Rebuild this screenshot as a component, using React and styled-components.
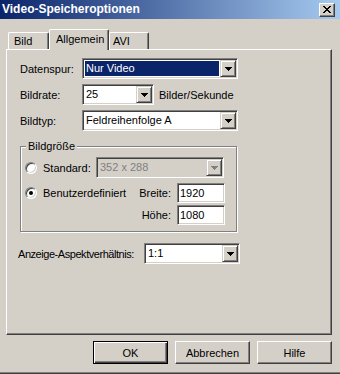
import React from 'react';
import styled, { createGlobalStyle } from 'styled-components';

const Global = createGlobalStyle`
  html, body { margin: 0; padding: 0; background: #d4d0c8; }
  body {
    font-family: "Liberation Sans", Arial, sans-serif;
    font-size: 11px;
    color: #000;
  }
`;

const Window = styled.div`
  width: 340px;
  height: 374px;
  box-sizing: border-box;
  display: flex;
  flex-direction: column;
  background: #d4d0c8;
  border-bottom: 1px solid #404040;
  box-shadow: inset 0 -1px #808080;
`;

const TitleBar = styled.div`
  height: 19px;
  display: flex;
  align-items: center;
  justify-content: space-between;
  padding: 0 5px 0 2px;
  background: linear-gradient(to right, #0a246a, #a6caf0);
`;

const Title = styled.span`
  color: #fff;
  font-weight: bold;
  font-size: 12px;
  line-height: 19px;
`;

const CloseBtn = styled.div`
  width: 16px;
  height: 14px;
  box-sizing: border-box;
  display: flex;
  align-items: center;
  justify-content: center;
  background: #d4d0c8;
  border: 1px solid;
  border-color: #fff #404040 #404040 #fff;
  box-shadow: inset -1px -1px #808080;
`;

const Body = styled.div`
  padding: 10px 0 0 6px;
`;

const TabStrip = styled.div`
  display: flex;
  align-items: flex-start;
  height: 21px;
  margin-bottom: -1px;
  padding-left: 2px;
  position: relative;
  z-index: 1;
`;

const Tab = styled.div`
  box-sizing: border-box;
  width: ${p => p.w}px;
  height: ${p => (p.active ? 21 : 17)}px;
  margin-top: ${p => (p.active ? 0 : 3)}px;
  padding-left: ${p => p.pl}px;
  padding-top: ${p => (p.active ? 2 : 1)}px;
  line-height: 15px;
  background: #d4d0c8;
  border-top: 1px solid #fff;
  border-left: 1px solid #fff;
  border-right: 1px solid #404040;
  border-radius: 2px 2px 0 0;
  box-shadow: inset -1px 0 #808080;
`;

const Panel = styled.div`
  width: 326px;
  height: 286px;
  box-sizing: border-box;
  padding: 8px 0 0 13px;
  border: 1px solid;
  border-color: #fff #404040 #404040 #fff;
  box-shadow: inset -1px -1px #808080;
`;

const FieldGrid = styled.div`
  display: grid;
  grid-template-columns: 62px auto;
  grid-auto-rows: 21px;
  row-gap: 5px;
  align-items: center;
`;

const Inline = styled.div`
  display: flex;
  align-items: center;
  gap: 5px;
`;

const ComboBox = styled.div`
  width: ${p => p.w}px;
  height: 21px;
  box-sizing: border-box;
  display: flex;
  padding: 1px;
  border: 1px solid;
  border-color: #808080 #fff #fff #808080;
  box-shadow: inset 1px 1px #404040, inset -1px -1px #d4d0c8;
  background: ${p => (p.disabled ? '#d4d0c8' : '#fff')};
`;

const ComboField = styled.div`
  flex: 1;
  line-height: 15px;
  margin: 1px;
  padding-left: 1px;
  white-space: nowrap;
  overflow: hidden;
  background: ${p => (p.selected ? '#0a246a' : 'transparent')};
  color: ${p => (p.selected ? '#fff' : p.disabled ? '#808080' : '#000')};
`;

const DropButton = styled.div`
  width: 16px;
  height: 17px;
  box-sizing: border-box;
  display: flex;
  align-items: center;
  justify-content: center;
  background: #d4d0c8;
  border: 1px solid;
  border-color: #d4d0c8 #404040 #404040 #d4d0c8;
  box-shadow: inset 1px 1px #fff, inset -1px -1px #808080;
`;

const TextBox = styled.div`
  height: 20px;
  box-sizing: border-box;
  padding: 1px 2px;
  line-height: 16px;
  border: 1px solid;
  border-color: #808080 #fff #fff #808080;
  box-shadow: inset 1px 1px #404040, inset -1px -1px #d4d0c8;
  background: #fff;
`;

const Group = styled.div`
  position: relative;
  width: 217px;
  box-sizing: border-box;
  margin-top: 15px;
  padding: 10px 11px 6px 4px;
  border: 1px solid #808080;
  box-shadow: 1px 1px #fff, inset 1px 1px #fff;
`;

const Legend = styled.span`
  position: absolute;
  top: -7px;
  left: 5px;
  padding: 0 2px;
  line-height: 13px;
  background: #d4d0c8;
`;

const Row = styled.div`
  display: flex;
  align-items: center;
  height: 21px;
`;

const RadioOption = styled.div`
  display: flex;
  align-items: center;
  gap: 6px;
  width: ${p => (p.w ? `${p.w}px` : 'auto')};
`;

const RadioCircle = styled.div`
  width: 12px;
  height: 12px;
  box-sizing: border-box;
  border-radius: 50%;
  background: #fff;
  border: 1px solid;
  border-color: #808080 #fff #fff #808080;
  box-shadow: inset 1px 1px #404040, inset -1px -1px #d4d0c8;
  display: flex;
  align-items: center;
  justify-content: center;
  &::after {
    content: '';
    width: 4px;
    height: 4px;
    border-radius: 50%;
    background: ${p => (p.checked ? '#000' : 'transparent')};
  }
`;

const SizeGrid = styled.div`
  display: grid;
  grid-template-columns: 1fr auto 48px;
  grid-template-rows: 20px 20px;
  column-gap: 6px;
  row-gap: 2px;
  align-items: center;
  margin-top: 5px;
`;

const FieldLabel = styled.span`
  text-align: right;
`;

const AspectRow = styled.div`
  display: grid;
  grid-template-columns: 126px 96px;
  align-items: center;
  margin: 11px 0 0 -2px;
`;

const AspectLabel = styled.span`
  letter-spacing: -0.45px;
  white-space: nowrap;
`;

const ButtonRow = styled.div`
  display: flex;
  justify-content: flex-end;
  gap: 7px;
  margin-top: 6px;
  padding-right: 8px;
`;

const Button = styled.div`
  width: 75px;
  height: 23px;
  box-sizing: border-box;
  display: flex;
  align-items: center;
  justify-content: center;
  border: 1px solid;
  border-color: ${p => (p.primary ? '#000' : '#fff #404040 #404040 #fff')};
  box-shadow: ${p =>
    p.primary
      ? 'inset 1px 1px #fff, inset -1px -1px #404040, inset -2px -2px #808080'
      : 'inset -1px -1px #808080'};
`;

const Arrow = ({ color = '#000' }) => (
  <svg width="7" height="4" viewBox="0 0 7 4" shapeRendering="crispEdges">
    <rect x="0" y="0" width="7" height="1" fill={color} />
    <rect x="1" y="1" width="5" height="1" fill={color} />
    <rect x="2" y="2" width="3" height="1" fill={color} />
    <rect x="3" y="3" width="1" height="1" fill={color} />
  </svg>
);

const Combo = ({ w, value, selected, disabled }) => (
  <ComboBox w={w} disabled={disabled}>
    <ComboField selected={selected} disabled={disabled}>{value}</ComboField>
    <DropButton>
      <Arrow color={disabled ? '#808080' : '#000'} />
    </DropButton>
  </ComboBox>
);

const CloseIcon = () => (
  <svg width="8" height="7" viewBox="0 0 8 7" shapeRendering="crispEdges">
    <path d="M0 0h2l2 2.5 2-2.5h2l-3 3.5 3 3.5h-2l-2-2.5-2 2.5h-2l3-3.5z" fill="#000" />
  </svg>
);

export default function App() {
  return (
    <>
      <Global />
      <Window>
        <TitleBar>
          <Title>Video-Speicheroptionen</Title>
          <CloseBtn><CloseIcon /></CloseBtn>
        </TitleBar>
        <Body>
          <TabStrip>
            <Tab w={41} pl={5}>Bild</Tab>
            <Tab w={60} pl={6} active>Allgemein</Tab>
            <Tab w={40} pl={3}>AVI</Tab>
          </TabStrip>
          <Panel>
            <FieldGrid>
              <span>Datenspur:</span>
              <Combo w={156} value="Nur Video" selected />
              <span>Bildrate:</span>
              <Inline>
                <Combo w={72} value="25" />
                <span>Bilder/Sekunde</span>
              </Inline>
              <span>Bildtyp:</span>
              <Combo w={156} value="Feldreihenfolge A" />
            </FieldGrid>

            <Group>
              <Legend>Bildgröße</Legend>
              <Row>
                <RadioOption w={71}>
                  <RadioCircle />
                  <span>Standard:</span>
                </RadioOption>
                <Combo w={128} value="352 x 288" disabled />
              </Row>
              <SizeGrid>
                <RadioOption>
                  <RadioCircle checked />
                  <span>Benutzerdefiniert</span>
                </RadioOption>
                <FieldLabel>Breite:</FieldLabel>
                <TextBox>1920</TextBox>
                <span />
                <FieldLabel>Höhe:</FieldLabel>
                <TextBox>1080</TextBox>
              </SizeGrid>
            </Group>

            <AspectRow>
              <AspectLabel>Anzeige-Aspektverhältnis:</AspectLabel>
              <Combo w={96} value="1:1" />
            </AspectRow>
          </Panel>
          <ButtonRow>
            <Button primary>OK</Button>
            <Button>Abbrechen</Button>
            <Button>Hilfe</Button>
          </ButtonRow>
        </Body>
      </Window>
    </>
  );
}
